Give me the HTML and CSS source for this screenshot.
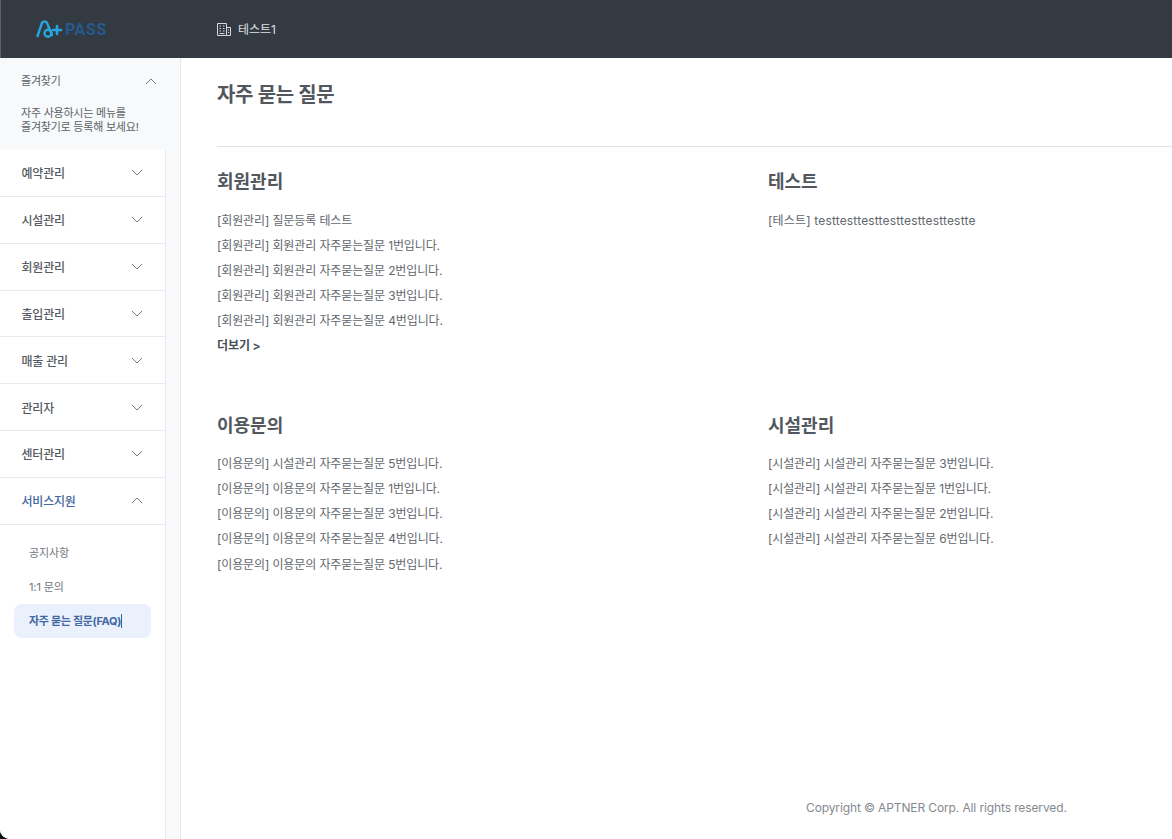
FILE: index.html
```html
<!DOCTYPE html>
<html lang="ko">
<head>
	<meta charset="UTF-8">
	<title>자주 묻는 질문</title>
	<link rel="stylesheet" href="styles.css">
</head>
<body>
	<div class="app">
		<header class="topbar">
			<div class="logo">
				<svg class="logo-mark" width="29" height="18" viewBox="0 0 29 18" fill="none" stroke="#27a5df" stroke-width="2.4" stroke-linecap="round" stroke-linejoin="round">
					<path d="M1.5 16 L6 3 Q6.5 1.6 7.8 1.6 H9.2 Q10.4 1.6 11 3 L16 15"/>
					<circle cx="12" cy="13.2" r="3.5"/>
					<path d="M17 10 H25 M21 6 V14" stroke-width="2.6"/>
				</svg>
				<span class="logo-text">PASS</span>
			</div>
			<div class="site">
				<svg class="site-icon" width="14" height="14" viewBox="0 0 14 14" fill="none" stroke="#d5d8dc" stroke-width="1">
					<path d="M.5 1.5 H9.5 V13.5 H.5 Z M9.5 5.5 H13.5 V13.5 H9.5"/>
					<path d="M2.5 4 H4 M6 4 H7.5 M2.5 6.5 H4 M6 6.5 H7.5 M2.5 9 H4 M6 9 H7.5 M2.5 11.5 H7.5 M11 8 H12 M11 10.5 H12"/>
				</svg>
				<span class="site-name">테스트1</span>
			</div>
		</header>
		<div class="body-wrap">
			<aside class="sidebar">
				<section class="favorites">
					<div class="favorites-head">
						<span>즐겨찾기</span>
						<svg class="chev" width="12" height="7" viewBox="0 0 12 7"><path d="M1 6 L6 1 L11 6"/></svg>
					</div>
					<p class="favorites-text">자주 사용하시는 메뉴를<br>즐겨찾기로 등록해 보세요!</p>
				</section>
				<nav class="menu">
					<a class="menu-row" href="javascript:;"><span>예약관리</span><svg class="chev" width="12" height="7" viewBox="0 0 12 7"><path d="M1 1 L6 6 L11 1"/></svg></a>
					<a class="menu-row" href="javascript:;"><span>시설관리</span><svg class="chev" width="12" height="7" viewBox="0 0 12 7"><path d="M1 1 L6 6 L11 1"/></svg></a>
					<a class="menu-row" href="javascript:;"><span>회원관리</span><svg class="chev" width="12" height="7" viewBox="0 0 12 7"><path d="M1 1 L6 6 L11 1"/></svg></a>
					<a class="menu-row" href="javascript:;"><span>출입관리</span><svg class="chev" width="12" height="7" viewBox="0 0 12 7"><path d="M1 1 L6 6 L11 1"/></svg></a>
					<a class="menu-row" href="javascript:;"><span>매출 관리</span><svg class="chev" width="12" height="7" viewBox="0 0 12 7"><path d="M1 1 L6 6 L11 1"/></svg></a>
					<a class="menu-row" href="javascript:;"><span>관리자</span><svg class="chev" width="12" height="7" viewBox="0 0 12 7"><path d="M1 1 L6 6 L11 1"/></svg></a>
					<a class="menu-row" href="javascript:;"><span>센터관리</span><svg class="chev" width="12" height="7" viewBox="0 0 12 7"><path d="M1 1 L6 6 L11 1"/></svg></a>
					<a class="menu-row open" href="javascript:;"><span>서비스지원</span><svg class="chev" width="12" height="7" viewBox="0 0 12 7"><path d="M1 6 L6 1 L11 6"/></svg></a>
					<ul class="submenu">
						<li><a href="javascript:;">공지사항</a></li>
						<li><a href="javascript:;">1:1 문의</a></li>
						<li class="active"><a href="javascript:;"><span class="caret-text">자주 묻는 질문(FAQ)</span></a></li>
					</ul>
				</nav>
			</aside>
			<main class="content">
				<h1 class="page-title">자주 묻는 질문</h1>
				<div class="faq-grid">
					<section class="faq-group">
						<h2>회원관리</h2>
						<ul>
							<li>[회원관리] 질문등록 테스트</li>
							<li>[회원관리] 회원관리 자주묻는질문 1번입니다.</li>
							<li>[회원관리] 회원관리 자주묻는질문 2번입니다.</li>
							<li>[회원관리] 회원관리 자주묻는질문 3번입니다.</li>
							<li>[회원관리] 회원관리 자주묻는질문 4번입니다.</li>
						</ul>
						<a class="more" href="javascript:;">더보기 &gt;</a>
					</section>
					<section class="faq-group">
						<h2>테스트</h2>
						<ul>
							<li class="latin">[테스트] testtesttesttesttesttesttestte</li>
						</ul>
					</section>
					<section class="faq-group">
						<h2>이용문의</h2>
						<ul>
							<li>[이용문의] 시설관리 자주묻는질문 5번입니다.</li>
							<li>[이용문의] 이용문의 자주묻는질문 1번입니다.</li>
							<li>[이용문의] 이용문의 자주묻는질문 3번입니다.</li>
							<li>[이용문의] 이용문의 자주묻는질문 4번입니다.</li>
							<li>[이용문의] 이용문의 자주묻는질문 5번입니다.</li>
						</ul>
					</section>
					<section class="faq-group">
						<h2>시설관리</h2>
						<ul>
							<li>[시설관리] 시설관리 자주묻는질문 3번입니다.</li>
							<li>[시설관리] 시설관리 자주묻는질문 1번입니다.</li>
							<li>[시설관리] 시설관리 자주묻는질문 2번입니다.</li>
							<li>[시설관리] 시설관리 자주묻는질문 6번입니다.</li>
						</ul>
					</section>
				</div>
				<footer class="copyright">Copyright © APTNER Corp. All rights reserved.</footer>
			</main>
		</div>
	</div>
</body>
</html>
```

FILE: styles.css
```css
* {
	margin: 0;
	padding: 0;
	box-sizing: border-box;
}
html,body {
	height: 100%;
	overflow: hidden;
	background: #0b1414;
}
body {
	font-family: Inter, "Noto Sans CJK KR", sans-serif;
	font-size: 12px;
	color: #4a4f57;
}
li {
	list-style: none;
}
a {
	text-decoration: none;
	color: inherit;
}
.app {
	height: 839px;
	display: flex;
	flex-direction: column;
	background: #fff;
	border-bottom-left-radius: 10px;
	overflow: hidden;
}

/* top bar */
.topbar {
	height: 58px;
	flex: none;
	display: flex;
	align-items: center;
	background: #343a42;
	border-left: 1px solid #5a6068;
}
.logo {
	width: 216px;
	padding-left: 35px;
	display: flex;
	align-items: center;
}
.logo-text {
	font-family: Roboto, sans-serif;
	font-size: 16px;
	font-weight: 700;
	letter-spacing: .6px;
	color: #245a8e;
}
.site {
	display: flex;
	align-items: center;
	gap: 7px;
	font-size: 12px;
	color: #dfe1e4;
}
.site-name {
	margin-top: -2px;
}

/* sidebar */
.body-wrap {
	flex: 1;
	display: flex;
	min-height: 0;
}
.sidebar {
	width: 181px;
	flex: none;
	display: flex;
	flex-direction: column;
	background: #f8f9fb;
	border-right: 1px solid #e8e9ec;
}
.favorites {
	height: 92px;
	flex: none;
	padding: 16px 23px 0 21px;
	font-size: 11px;
	line-height: 14px;
	letter-spacing: -.22px;
	color: #5c6168;
}
.favorites-head {
	display: flex;
	justify-content: space-between;
	align-items: center;
	margin-bottom: 18px;
}
.chev {
	flex: none;
	fill: none;
	stroke: #777c83;
	stroke-width: 1;
}
.menu {
	flex: 1;
	width: 166px;
	background: #fff;
	border-right: 1px solid #e8e9ec;
}
.menu-row {
	height: 46.85px;
	display: flex;
	justify-content: space-between;
	align-items: center;
	padding: 0 22px 0 21.5px;
	border-bottom: 1px solid #e8e9ec;
	font-weight: 500;
	letter-spacing: -.2px;
	color: #555a62;
}
.menu-row.open {
	color: #4468a0;
}
.submenu {
	padding: 11px 14px 0;
	font-size: 11px;
	letter-spacing: -.1px;
	color: #72777e;
}
.submenu li {
	height: 34px;
	line-height: 34px;
	padding-left: 15px;
	border-radius: 8px;
}
.submenu li.active {
	background: #eaf1fd;
	color: #4468a0;
	font-weight: 700;
	letter-spacing: -.3px;
}
.caret-text {
	border-right: 1px solid #3a6098;
}

/* content */
.content {
	flex: 1;
	min-width: 0;
	padding-left: 36px;
	display: flex;
	flex-direction: column;
}
.page-title {
	height: 89px;
	padding-top: 21px;
	font-size: 20px;
	line-height: 32px;
	font-weight: 700;
	letter-spacing: -.3px;
	color: #52575e;
	border-bottom: 1px solid #e2e3e6;
}
.faq-grid {
	display: grid;
	grid-template-columns: 551px 1fr;
	grid-auto-rows: 243.7px;
}
.faq-group {
	padding-top: 20px;
}
.faq-group h2 {
	padding-top: 1px;
	font-size: 18px;
	line-height: 28px;
	font-weight: 700;
	color: #52575e;
	margin-bottom: 11.5px;
}
.faq-group li {
	height: 25.1px;
	line-height: 25px;
	letter-spacing: -.12px;
	color: #62666d;
}
.faq-group li.latin {
	letter-spacing: .17px;
}
.more {
	display: block;
	line-height: 25px;
	font-weight: 700;
	letter-spacing: -.1px;
	color: #4a4f57;
}
.copyright {
	margin-top: auto;
	padding: 0 0 23px 589px;
	line-height: 16px;
	white-space: nowrap;
	font-size: 12px;
	letter-spacing: -.12px;
	color: #85898f;
}
```
